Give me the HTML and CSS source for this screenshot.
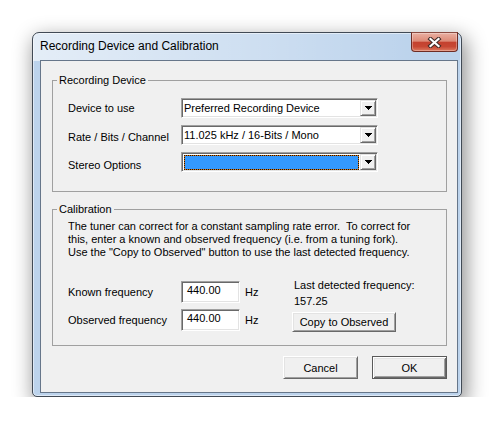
FILE: index.html
```html
<!DOCTYPE html>
<html lang="en">
<head>
<meta charset="utf-8">
<title>Recording Device and Calibration</title>
<link rel="stylesheet" href="styles.css">
</head>
<body>
<div class="desk">
  <div class="window">
    <div class="titlebar">
      <span class="title">Recording Device and Calibration</span>
      <button class="close" aria-label="Close">
        <svg width="15" height="11" viewBox="0 0 15 11"><path d="M3.5 2 L11.5 9 M11.5 2 L3.5 9" stroke="#3e2a27" stroke-width="4.2" stroke-linecap="square" fill="none"/><path d="M3.5 2 L11.5 9 M11.5 2 L3.5 9" stroke="#ffffff" stroke-width="2.2" stroke-linecap="square" fill="none"/></svg>
      </button>
    </div>
    <div class="client">
      <fieldset class="group g1">
        <legend>Recording Device</legend>
        <div class="group-body">
          <div class="row">
            <span class="lbl">Device to use</span>
            <div class="combo"><span class="combo-text">Preferred Recording Device</span><span class="drop"><svg width="7" height="4" viewBox="0 0 7 4"><path d="M0 0h7v1H0z M1 1h5v1H1z M2 2h3v1H2z M3 3h1v1H3z" fill="#000"/></svg></span></div>
          </div>
          <div class="row">
            <span class="lbl lbl-2">Rate / Bits / Channel</span>
            <div class="combo"><span class="combo-text">11.025 kHz / 16-Bits / Mono</span><span class="drop"><svg width="7" height="4" viewBox="0 0 7 4"><path d="M0 0h7v1H0z M1 1h5v1H1z M2 2h3v1H2z M3 3h1v1H3z" fill="#000"/></svg></span></div>
          </div>
          <div class="row">
            <span class="lbl lbl-3">Stereo Options</span>
            <div class="combo"><span class="sel"><span class="sel-inner"></span></span><span class="drop"><svg width="7" height="4" viewBox="0 0 7 4"><path d="M0 0h7v1H0z M1 1h5v1H1z M2 2h3v1H2z M3 3h1v1H3z" fill="#000"/></svg></span></div>
          </div>
        </div>
      </fieldset>
      <fieldset class="group g2">
        <legend>Calibration</legend>
        <div class="group-body">
          <p class="desc">The tuner can correct for a constant sampling rate error.&nbsp; To correct for<br>this, enter a known and observed frequency (i.e. from a tuning fork).<br>Use the "Copy to Observed" button to use the last detected frequency.</p>
          <div class="freq">
            <div class="freq-left">
              <div class="frow"><span class="lbl">Known frequency</span><span class="field">440.00</span><span class="unit">Hz</span></div>
              <div class="frow"><span class="lbl">Observed frequency</span><span class="field">440.00</span><span class="unit">Hz</span></div>
            </div>
            <div class="freq-right">
              <div class="last">Last detected frequency:</div>
              <div class="last">157.25</div>
              <button class="btn copy">Copy to Observed</button>
            </div>
          </div>
        </div>
      </fieldset>
      <div class="actions">
        <button class="btn">Cancel</button>
        <button class="btn default">OK</button>
      </div>
    </div>
  </div>
</div>
</body>
</html>
```
FILE: styles.css
```css
* { box-sizing: border-box; }
html, body { margin: 0; background: #ffffff; }
body {
  font-family: "Liberation Sans", Arial, sans-serif;
  font-size: 11px;
  color: #000;
}
.desk { padding: 32px 0 0 32px; }

.window {
  width: 430px;
  height: 365px;
  border: 1px solid #414a55;
  border-radius: 7px 7px 5px 5px;
  background:
    linear-gradient(90deg, rgba(255,255,255,0.6) 0%, rgba(255,255,255,0.25) 55%, rgba(255,255,255,0) 90%) top left / 100% 28px no-repeat,
    #bcd3ec;
  box-shadow: inset 0 0 0 1px rgba(255,255,255,0.5), 3px 7px 20px 2px rgba(0,0,0,0.42);
  padding: 0 3px 3px 7px;
  display: flex;
  flex-direction: column;
}

.titlebar {
  height: 27px;
  display: flex;
  justify-content: space-between;
  align-items: flex-start;
  flex: none;
}
.title {
  font-size: 12px;
  line-height: 15px;
  margin-top: 6px;
  color: #000;
}
.close {
  width: 47px;
  height: 20px;
  margin: -1px 0 0 0;
  padding: 0;
  border: 1px solid #6e2c24;
  border-top-color: #8a4a40;
  border-radius: 0 0 4px 4px;
  background: linear-gradient(180deg, #eab0a2 0%, #dd8a77 45%, #c4412f 52%, #c74733 75%, #dd7a60 100%);
  box-shadow: inset 0 0 0 1px rgba(255,255,255,0.3);
  display: flex;
  align-items: center;
  justify-content: center;
}
.close svg { display: block; }

.client {
  flex: 1;
  border: 1px solid #66768a;
  background: #f0f0f0;
  padding: 0 10px 0 11px;
}

.group {
  margin: 0;
  padding: 0 0 0 4px;
  border: 1px solid #a0a0a0;
  min-width: 0;
}
.group legend {
  padding: 0 2px;
  line-height: 13px;
  font-size: 11px;
}
.g1 { margin-top: 13px; padding-top: 11px; padding-bottom: 19px; }
.g2 { margin-top: 11px; padding-top: 4px; padding-bottom: 13px; }
.group-body { padding-left: 11px; }

.row {
  display: flex;
  align-items: center;
  height: 20px;
}
.row + .row { margin-top: 7px; }
.lbl { width: 113px; flex: none; white-space: nowrap; }
.lbl-2 { margin-top: 3px; }
.lbl-3 { margin-top: 6px; }

.combo {
  width: 197px;
  height: 20px;
  display: flex;
  background: #fff;
  border: 1px solid;
  border-color: #a0a0a0 #ffffff #ffffff #a0a0a0;
  box-shadow: inset 1px 1px 0 #696969, inset -1px -1px 0 #e3e3e3;
  padding: 1px;
}
.combo-text {
  flex: 1;
  padding-left: 1px;
  line-height: 16px;
  white-space: nowrap;
  overflow: hidden;
}
.drop {
  width: 16px;
  height: 16px;
  flex: none;
  background: #f0f0f0;
  border: 1px solid;
  border-color: #e3e3e3 #696969 #696969 #e3e3e3;
  box-shadow: inset 1px 1px 0 #ffffff, inset -1px -1px 0 #a0a0a0;
  display: flex;
  align-items: center;
  justify-content: center;
  padding-left: 1px;
}
.drop svg { display: block; }
.sel {
  flex: 1;
  margin: 1px 1px 0 1px;
  background: #d9740f;
  display: flex;
}
.sel-inner {
  flex: 1;
  border: 1px dotted #111;
  background: #3399ff;
  background-clip: padding-box;
}

.desc {
  margin: 0;
  line-height: 13px;
  white-space: nowrap;
}
.freq {
  display: flex;
  align-items: flex-start;
  margin-top: 18px;
}
.freq-left {
  width: 224px;
  flex: none;
  padding-top: 4px;
}
.frow {
  display: flex;
  align-items: center;
  height: 22px;
}
.frow + .frow { margin-top: 6px; }
.field {
  width: 59px;
  height: 22px;
  flex: none;
  background: #fff;
  border: 1px solid;
  border-color: #a0a0a0 #ffffff #ffffff #a0a0a0;
  box-shadow: inset 1px 1px 0 #696969, inset -1px -1px 0 #e3e3e3;
  padding: 2px 4px 0 5px;
  line-height: 13px;
  align-self: flex-start;
}
.unit { margin-left: 5px; }

.freq-right {
  display: flex;
  flex-direction: column;
  align-items: flex-start;
}
.last { line-height: 16px; padding-left: 2px; white-space: nowrap; }

.btn {
  font-family: "Liberation Sans", Arial, sans-serif;
  font-size: 11px;
  color: #000;
  background: #f0f0f0;
  padding: 0;
  border: 1px solid;
  border-color: #ffffff #696969 #696969 #ffffff;
  box-shadow: inset 1px 1px 0 #e3e3e3, inset -1px -1px 0 #a0a0a0;
  border-radius: 0;
}
.copy {
  width: 104px;
  height: 20px;
  margin-top: 3px;
}

.actions {
  display: flex;
  justify-content: flex-end;
  gap: 14px;
  margin-top: 10px;
}
.actions .btn {
  width: 75px;
  height: 23px;
}
.btn.default {
  border-color: #5a5a5a;
  box-shadow: inset 1px 1px 0 #ffffff, inset -1px -1px 0 #696969, inset 2px 2px 0 #e3e3e3, inset -2px -2px 0 #a0a0a0;
}
```
